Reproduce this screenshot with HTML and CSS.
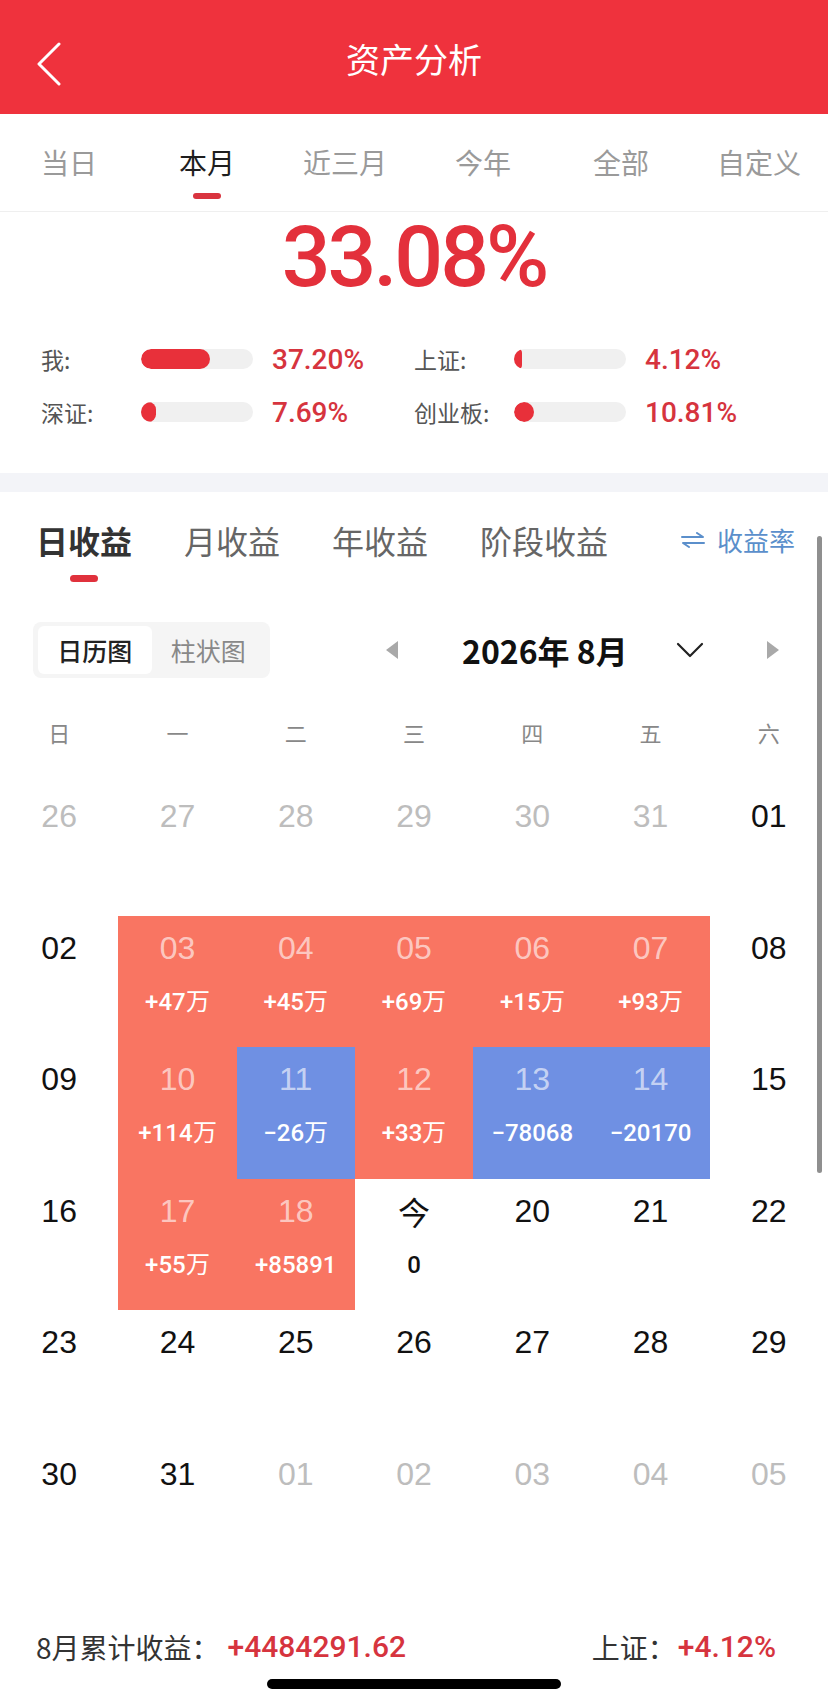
FILE: index.html
```html
<!DOCTYPE html>
<html lang="zh-CN">
<head>
<meta charset="utf-8">
<title>资产分析</title>
<link rel="stylesheet" href="styles.css">
</head>
<body>
<div class="page">
  <header class="header">
    <div class="back">
      <svg width="26" height="44" viewBox="0 0 26 44"><polyline points="23,2 3,22 23,42" fill="none" stroke="#fff" stroke-width="3" stroke-linecap="round" stroke-linejoin="round"/></svg>
    </div>
    <div class="title">资产分析</div>
    <div></div>
  </header>

  <nav class="tabs">
    <div class="tab">当日</div>
    <div class="tab active">本月</div>
    <div class="tab">近三月</div>
    <div class="tab">今年</div>
    <div class="tab">全部</div>
    <div class="tab">自定义</div>
  </nav>

  <section class="summary">
    <div class="big">33.08%</div>
    <div class="compare">
      <div class="cmp"><span class="cmp-label">我:</span><span class="bar"><span class="bar-fill" style="width:62%"></span></span><span class="cmp-val">37.20%</span></div>
      <div class="cmp"><span class="cmp-label">上证:</span><span class="bar"><span class="bar-fill" style="width:7%"></span></span><span class="cmp-val">4.12%</span></div>
      <div class="cmp"><span class="cmp-label">深证:</span><span class="bar"><span class="bar-fill" style="width:13%"></span></span><span class="cmp-val">7.69%</span></div>
      <div class="cmp"><span class="cmp-label">创业板:</span><span class="bar"><span class="bar-fill" style="width:18%"></span></span><span class="cmp-val">10.81%</span></div>
    </div>
  </section>

  <div class="band"></div>

  <section class="income">
    <div class="stabs">
      <div class="stab active">日收益</div>
      <div class="stab">月收益</div>
      <div class="stab">年收益</div>
      <div class="stab">阶段收益</div>
      <div class="rate">
        <svg width="24" height="16" viewBox="0 0 24 16"><path d="M1 5 H22 L16 1" fill="none" stroke="#5b8fcb" stroke-width="2" stroke-linecap="round" stroke-linejoin="round"/><path d="M23 11 H2 L8 15" fill="none" stroke="#5b8fcb" stroke-width="2" stroke-linecap="round" stroke-linejoin="round"/></svg>
        <span>收益率</span>
      </div>
    </div>

    <div class="toolbar">
      <div class="toggle">
        <div class="tg active">日历图</div>
        <div class="tg">柱状图</div>
      </div>
      <div class="nav">
        <svg class="prev" width="14" height="18" viewBox="0 0 14 18"><polygon points="13,0 13,18 1,9" fill="#a9a9a9"/></svg>
        <div class="month">2026年 8月</div>
        <svg class="chev" width="28" height="16" viewBox="0 0 28 16"><polyline points="2,2 14,14 26,2" fill="none" stroke="#222" stroke-width="2.2" stroke-linecap="round" stroke-linejoin="round"/></svg>
        <svg class="next" width="14" height="18" viewBox="0 0 14 18"><polygon points="1,0 1,18 13,9" fill="#a9a9a9"/></svg>
      </div>
    </div>

    <div class="weekdays">
      <div>日</div><div>一</div><div>二</div><div>三</div><div>四</div><div>五</div><div>六</div>
    </div>

    <div class="cal">
      <div class="day other"><span class="num">26</span></div>
      <div class="day other"><span class="num">27</span></div>
      <div class="day other"><span class="num">28</span></div>
      <div class="day other"><span class="num">29</span></div>
      <div class="day other"><span class="num">30</span></div>
      <div class="day other"><span class="num">31</span></div>
      <div class="day"><span class="num">01</span></div>

      <div class="day"><span class="num">02</span></div>
      <div class="day up"><span class="num">03</span><span class="val">+47万</span></div>
      <div class="day up"><span class="num">04</span><span class="val">+45万</span></div>
      <div class="day up"><span class="num">05</span><span class="val">+69万</span></div>
      <div class="day up"><span class="num">06</span><span class="val">+15万</span></div>
      <div class="day up"><span class="num">07</span><span class="val">+93万</span></div>
      <div class="day"><span class="num">08</span></div>

      <div class="day"><span class="num">09</span></div>
      <div class="day up"><span class="num">10</span><span class="val">+114万</span></div>
      <div class="day down"><span class="num">11</span><span class="val">−26万</span></div>
      <div class="day up"><span class="num">12</span><span class="val">+33万</span></div>
      <div class="day down"><span class="num">13</span><span class="val">−78068</span></div>
      <div class="day down"><span class="num">14</span><span class="val">−20170</span></div>
      <div class="day"><span class="num">15</span></div>

      <div class="day"><span class="num">16</span></div>
      <div class="day up"><span class="num">17</span><span class="val">+55万</span></div>
      <div class="day up"><span class="num">18</span><span class="val">+85891</span></div>
      <div class="day today"><span class="num">今</span><span class="val">0</span></div>
      <div class="day"><span class="num">20</span></div>
      <div class="day"><span class="num">21</span></div>
      <div class="day"><span class="num">22</span></div>

      <div class="day"><span class="num">23</span></div>
      <div class="day"><span class="num">24</span></div>
      <div class="day"><span class="num">25</span></div>
      <div class="day"><span class="num">26</span></div>
      <div class="day"><span class="num">27</span></div>
      <div class="day"><span class="num">28</span></div>
      <div class="day"><span class="num">29</span></div>

      <div class="day"><span class="num">30</span></div>
      <div class="day"><span class="num">31</span></div>
      <div class="day other"><span class="num">01</span></div>
      <div class="day other"><span class="num">02</span></div>
      <div class="day other"><span class="num">03</span></div>
      <div class="day other"><span class="num">04</span></div>
      <div class="day other"><span class="num">05</span></div>
    </div>

    <div class="footer">
      <div class="f-item"><span class="f-label">8月累计收益：</span><span class="f-val">+4484291.62</span></div>
      <div class="f-item"><span class="f-label">上证：</span><span class="f-val">+4.12%</span></div>
    </div>
  </section>

  <div class="home"></div>
  <div class="scrollbar"></div>
</div>
</body>
</html>
```
FILE: styles.css
```css
* { box-sizing: border-box; margin: 0; padding: 0; }
html, body { background: #fff; }
body {
  width: 828px;
  font-family: "Noto Sans CJK SC", "Noto Sans", sans-serif;
}
.page { position: relative; width: 828px; height: 1705px; overflow: hidden; }

.header {
  height: 114px;
  background: #ef323d;
  display: grid;
  grid-template-columns: 1fr auto 1fr;
  align-items: center;
}
.back { padding-left: 36px; padding-top: 14px; display: flex; }
.title { color: #fff; font-size: 34px; line-height: 40px; padding-top: 4px; }

.tabs { display: flex; height: 98px; border-bottom: 1px solid #efefef; }
.tab {
  flex: 1;
  display: flex;
  flex-direction: column;
  align-items: center;
  padding-top: 29px;
  font-size: 28px;
  line-height: 38px;
  color: #9a9a9a;
}
.tab.active { color: #1e1e1e; }
.tab.active::after {
  content: "";
  width: 28px;
  height: 6px;
  border-radius: 3px;
  background: #d9343f;
  margin-top: 12px;
}

.summary { padding: 2px 0 41px; }
.big {
  text-align: center;
  font-family: Roboto, sans-serif;
  font-weight: 500;
  font-size: 86px;
  line-height: 86px;
  color: #e3303b;
  letter-spacing: -3px;
}
.compare {
  display: grid;
  grid-template-columns: 373px 1fr;
  row-gap: 13px;
  padding-left: 41px;
  margin-top: 39px;
}
.cmp { display: flex; align-items: center; height: 40px; }
.cmp-label { width: 100px; font-size: 23px; color: #555; }
.bar {
  display: block;
  width: 112px;
  height: 20px;
  border-radius: 10px;
  background: #f0f0f0;
  margin-right: 19px;
  overflow: hidden;
}
.bar-fill { display: block; height: 100%; border-radius: 10px; background: #e8303a; }
.cmp-val { font-family: Roboto, sans-serif; font-weight: 500; font-size: 28px; color: #d6343e; }

.band { height: 19px; background: #f3f4f8; }

.stabs { display: flex; align-items: flex-start; padding: 28px 33px 0 36px; height: 90px; }
.stab {
  font-size: 32px;
  line-height: 40px;
  color: #666;
  margin-right: 52px;
  display: flex;
  flex-direction: column;
  align-items: center;
}
.stab.active { font-weight: 700; color: #333; }
.stab.active::after {
  content: "";
  width: 28px;
  height: 7px;
  border-radius: 4px;
  background: #e0313c;
  margin-top: 15px;
}
.rate {
  margin-left: auto;
  display: flex;
  align-items: center;
  gap: 12px;
  font-size: 26px;
  line-height: 40px;
  color: #5b8fcb;
}

.toolbar { display: flex; align-items: center; padding-left: 33px; margin-top: 40px; height: 56px; }
.toggle {
  display: flex;
  width: 237px;
  height: 56px;
  background: #f5f5f5;
  border-radius: 8px;
  padding: 4px 5px;
}
.tg {
  width: 115px;
  display: flex;
  align-items: center;
  justify-content: center;
  font-size: 25px;
  color: #888;
  border-radius: 6px;
}
.tg.active { background: #fff; color: #222; font-weight: 500; }
.nav { display: flex; align-items: center; margin-left: 115px; }
.month {
  margin-left: 63px;
  width: 175px;
  white-space: nowrap;
  font-weight: 700;
  font-size: 32px;
  line-height: 40px;
  color: #111;
}
.chev { margin-left: 39px; }
.next { margin-left: 62px; }

.weekdays {
  display: grid;
  grid-template-columns: repeat(7, 1fr);
  margin-top: 24px;
  height: 60px;
  align-items: center;
  text-align: center;
  font-size: 22px;
  color: #888;
}

.cal {
  display: grid;
  grid-template-columns: repeat(7, 1fr);
  grid-auto-rows: 131.5px;
  margin-top: 22px;
}
.day { display: flex; flex-direction: column; align-items: center; padding-top: 12px; }
.num { font-family: "Liberation Sans", Arial, sans-serif; font-size: 32px; line-height: 40px; color: #111; }
.day.other .num { color: #bdbdbd; }
.val {
  font-family: Roboto, sans-serif;
  font-weight: 500;
  font-size: 24px;
  line-height: 30px;
  margin-top: 19px;
  color: #fff;
}
.day.up { background: #f97562; }
.day.down { background: #6f90e3; }
.day.up .num, .day.down .num { color: rgba(255, 255, 255, 0.62); }
.day.today .num { font-family: "Noto Sans CJK SC", sans-serif; color: #111; }
.day.today .val { color: #111; }

.footer {
  display: flex;
  justify-content: space-between;
  padding: 0 52px 0 36px;
  margin-top: 54px;
  line-height: 40px;
}
.f-item { display: flex; align-items: center; }
.f-label { font-size: 28px; color: #333; }
.f-val { font-family: Roboto, sans-serif; font-weight: 500; font-size: 30px; color: #d6343e; margin-left: 8px; }
.f-item + .f-item .f-val { margin-left: 2px; }

.home { width: 294px; height: 10px; border-radius: 5px; background: #000; margin: 12px auto 0; }

.scrollbar {
  position: absolute;
  right: 6px;
  top: 536px;
  width: 5px;
  height: 637px;
  border-radius: 3px;
  background: #8f8f8f;
}
```
